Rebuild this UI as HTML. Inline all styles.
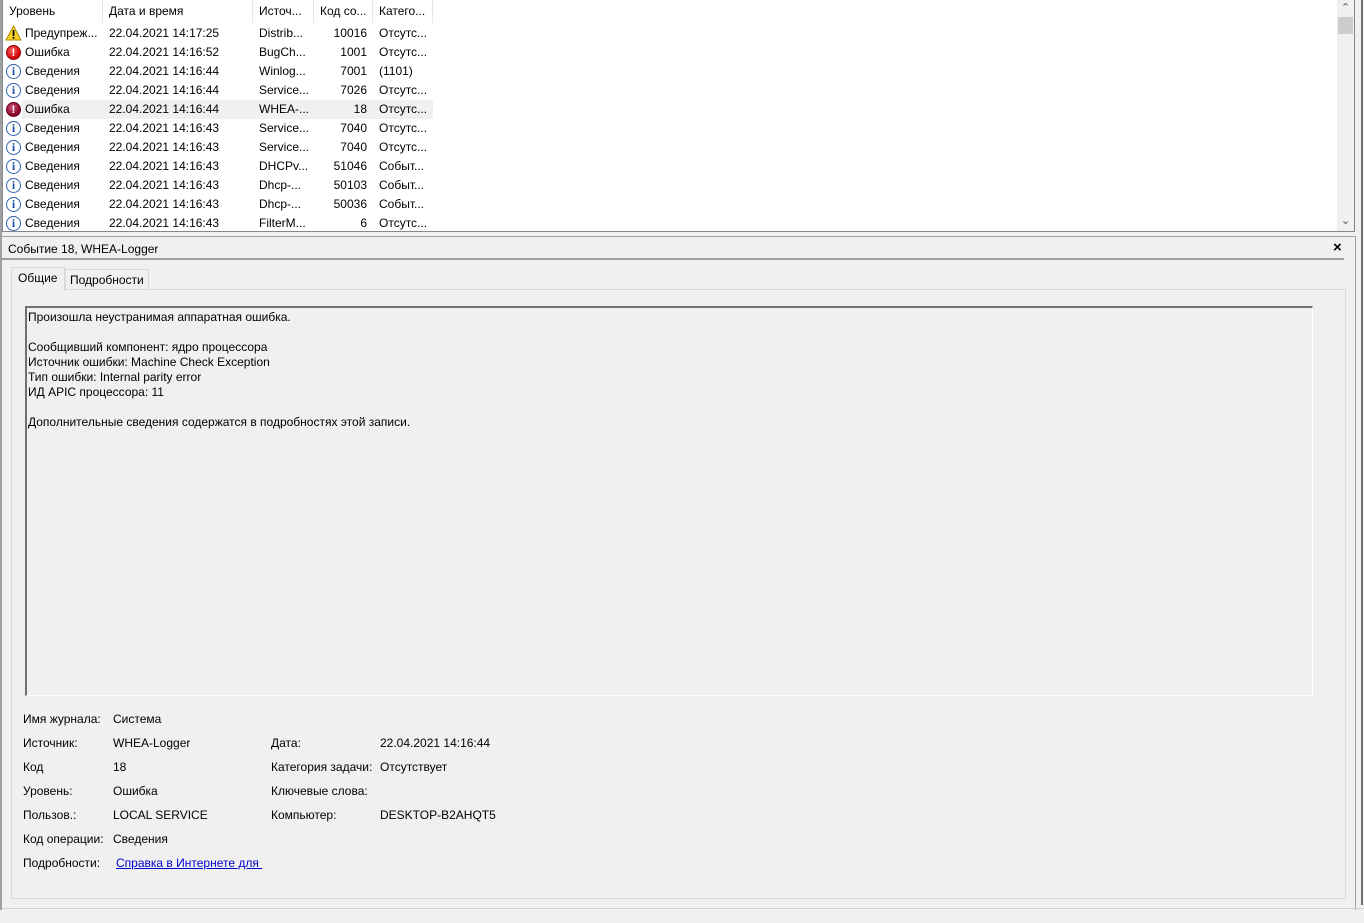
<!DOCTYPE html>
<html><head><meta charset="utf-8"><style>
*{margin:0;padding:0;box-sizing:border-box}
body{width:1364px;height:923px;background:#f0f0f0;font-family:"Liberation Sans",sans-serif;font-size:12px;color:#000;position:relative;overflow:hidden}
.a{position:absolute;white-space:nowrap}
#list{position:absolute;left:2px;top:0;width:1353px;height:232px;background:#fff;border-left:1px solid #828790;border-right:1px solid #828790;border-bottom:1px solid #828790}
.hd{position:absolute;top:0;height:23px;line-height:23px;padding-left:6px;border-right:1px solid #e5e5e5}
.row{position:absolute;left:1px;width:430px;height:19px;line-height:19px}
.ic{position:absolute;left:4px;top:2px;width:15px;height:15px;border-radius:50%;font-weight:bold;font-size:11px;text-align:center;line-height:14px}
.err{background:radial-gradient(circle at 40% 35%,#f66,#c00 70%);color:#fff;border:1px solid #900}
.err2{background:radial-gradient(circle at 40% 35%,#c57,#802 70%);color:#fff;border:1px solid #602}
.inf{background:#fff;border:1.5px solid #3060b0;color:#1d4fa8;font-family:"Liberation Serif",serif;font-size:12px;line-height:12px}
</style></head><body>
<div id="list">
  <div class="hd" style="left:0;width:100px">Уровень</div>
  <div class="hd" style="left:100px;width:150px">Дата и время</div>
  <div class="hd" style="left:250px;width:61px">Источ...</div>
  <div class="hd" style="left:311px;width:59px">Код со...</div>
  <div class="hd" style="left:370px;width:60px">Катего...</div>
  <div style="position:absolute;left:1334px;top:0;width:17px;height:231px;background:#f0f0f0"></div>
  <div class="a" style="left:1338px;top:1px;font-size:11px;color:#555">&#8963;</div>
  <div style="position:absolute;left:1335px;top:17px;width:15px;height:17px;background:#cdcdcd"></div>
  <div class="a" style="left:1338px;top:214px;font-size:11px;color:#555">&#8964;</div>
</div>
<div id="rows"></div>
<script>
var R=[["w","Предупреж...","22.04.2021 14:17:25","Distrib...","10016","Отсутс..."],
["e","Ошибка","22.04.2021 14:16:52","BugCh...","1001","Отсутс..."],
["i","Сведения","22.04.2021 14:16:44","Winlog...","7001","(1101)"],
["i","Сведения","22.04.2021 14:16:44","Service...","7026","Отсутс..."],
["s","Ошибка","22.04.2021 14:16:44","WHEA-...","18","Отсутс..."],
["i","Сведения","22.04.2021 14:16:43","Service...","7040","Отсутс..."],
["i","Сведения","22.04.2021 14:16:43","Service...","7040","Отсутс..."],
["i","Сведения","22.04.2021 14:16:43","DHCPv...","51046","Событ..."],
["i","Сведения","22.04.2021 14:16:43","Dhcp-...","50103","Событ..."],
["i","Сведения","22.04.2021 14:16:43","Dhcp-...","50036","Событ..."],
["i","Сведения","22.04.2021 14:16:43","FilterM...","6","Отсутс..."]];
var h="";
R.forEach(function(r,i){
 var t=24+19*i,ic;
 if(r[0]=="w")ic='<svg style="position:absolute;left:5px;top:1px" width="17" height="16"><path d="M8.5 1 L16 15 L1 15 Z" fill="#f8d12a" stroke="#b08a00"/><rect x="7.7" y="5" width="1.7" height="6" fill="#000"/><rect x="7.7" y="12" width="1.7" height="1.7" fill="#000"/></svg>';
 else if(r[0]=="e")ic='<div class="ic err" style="left:6px">!</div>';
 else if(r[0]=="s")ic='<div class="ic err2" style="left:6px">!</div>';
 else ic='<div class="ic inf" style="left:6px">i</div>';
 h+='<div class="row" style="top:'+t+'px;'+(r[0]=="s"?'background:#f0f0f0;left:22px;width:411px;':'left:2px;')+'">'+'</div>';
 h+='<div class="a" style="left:0;top:'+t+'px;height:19px;width:440px;line-height:19px">'+ic+
 '<span class="a" style="left:25px">'+r[1]+'</span><span class="a" style="left:109px">'+r[2]+'</span><span class="a" style="left:259px">'+r[3]+'</span><span class="a" style="left:320px;width:47px;text-align:right">'+r[4]+'</span><span class="a" style="left:379px">'+r[5]+'</span></div>';
});
document.getElementById("rows").innerHTML=h;
</script>
<div style="position:absolute;left:0;top:236px;width:1356px;height:674px;border-top:1px solid #a0a0a0;border-right:1px solid #a0a0a0"></div>
<div class="a" style="left:8px;top:241px;line-height:16px">Событие 18, WHEA-Logger</div>
<div class="a" style="left:1333px;top:239px;font-size:15px;font-weight:bold">&#215;</div>
<div style="position:absolute;left:2px;top:258px;width:1342px;height:2px;background:#a0a0a0"></div>
<div style="position:absolute;left:11px;top:289px;width:1335px;height:610px;border:1px solid #d9d9d9;background:#f0f0f0"></div>
<div style="position:absolute;left:11px;top:267px;width:54px;height:24px;background:#f0f0f0;border:1px solid #d9d9d9;border-bottom:none"></div>
<div class="a" style="left:18px;top:271px">Общие</div>
<div style="position:absolute;left:65px;top:269px;width:84px;height:20px;border:1px solid #d9d9d9;border-bottom:none;background:#f0f0f0"></div>
<div class="a" style="left:70px;top:273px">Подробности</div>
<div style="position:absolute;left:25px;top:306px;width:1288px;height:390px;border-top:2px solid #707070;border-left:2px solid #707070;border-right:1px solid #fff;border-bottom:1px solid #fff;background:#f0f0f0"></div>
<div class="a" style="left:28px;top:310px;line-height:15px">Произошла неустранимая аппаратная ошибка.<br><br>Сообщивший компонент: ядро процессора<br>Источник ошибки: Machine Check Exception<br>Тип ошибки: Internal parity error<br>ИД APIC процессора: 11<br><br>Дополнительные сведения содержатся в подробностях этой записи.</div>
<div class="a" style="left:23px;top:707px;line-height:24px">Имя журнала:<br>Источник:<br>Код<br>Уровень:<br>Пользов.:<br>Код операции:<br>Подробности:</div>
<div class="a" style="left:113px;top:707px;line-height:24px">Система<br>WHEA-Logger<br>18<br>Ошибка<br>LOCAL SERVICE<br>Сведения</div>
<div class="a" style="left:116px;top:855px;line-height:16px;color:#0000cc;text-decoration:underline">Справка в Интернете для&nbsp;</div>
<div class="a" style="left:271px;top:731px;line-height:24px">Дата:<br>Категория задачи:<br>Ключевые слова:<br>Компьютер:</div>
<div class="a" style="left:380px;top:731px;line-height:24px">22.04.2021 14:16:44<br>Отсутствует<br><br>DESKTOP-B2AHQT5</div>
<div style="position:absolute;left:0;top:908px;width:1364px;height:1px;background:#d0d0d0"></div>
<div style="position:absolute;left:0;top:0;width:2px;height:910px;background:#a0a0a0"></div>
<div style="position:absolute;left:1361px;top:0;width:2px;height:905px;background:#707070"></div>
</body></html>
